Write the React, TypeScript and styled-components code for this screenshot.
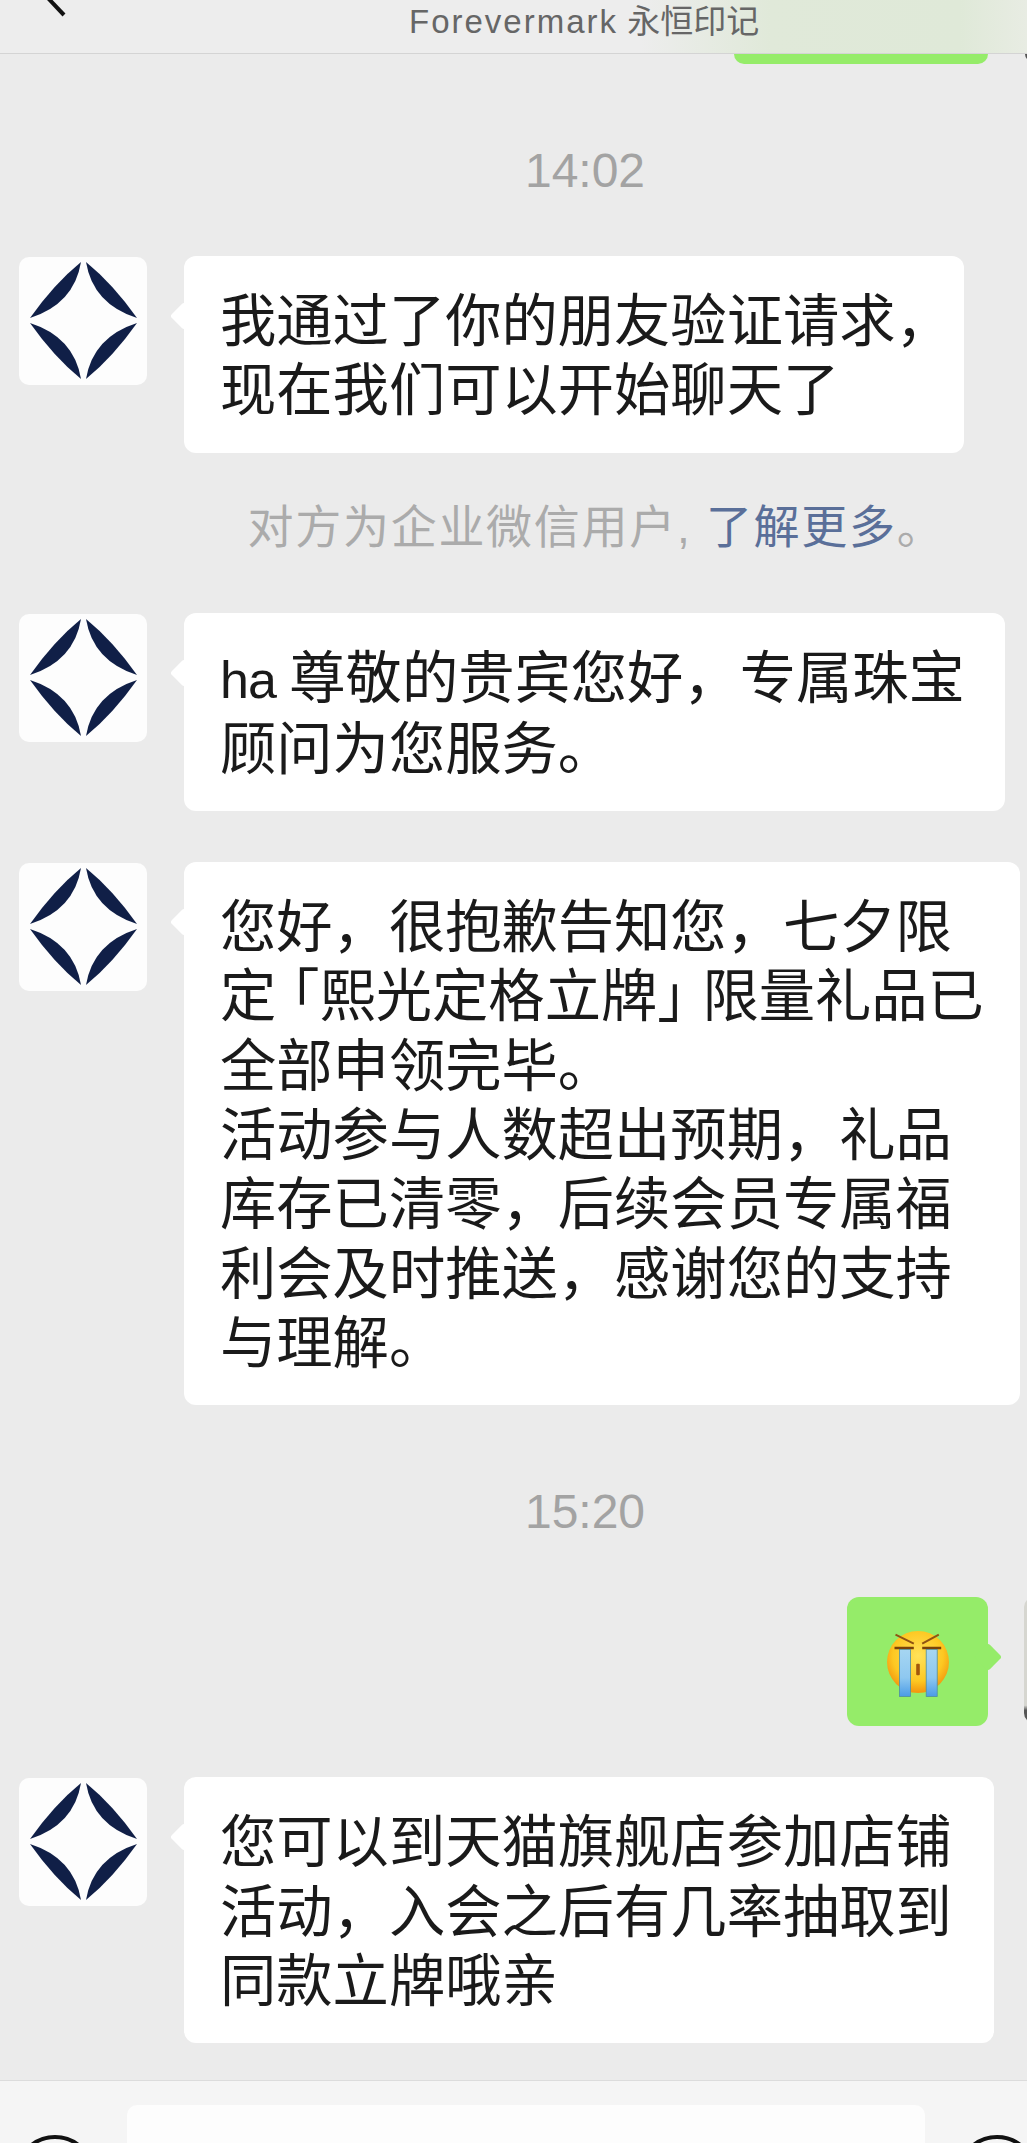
import React from "react"
import styled, { createGlobalStyle } from "styled-components"

const GlobalStyle = createGlobalStyle`
  html, body {
    margin: 0;
    padding: 0;
    background: #ebebeb;
  }
`

const LOGO_BLADES = [
    "M62 5Q35 27 11 61Q55 47 62 5Z",
    "M67 5Q94 27 118 61Q74 47 67 5Z",
    "M11 66Q35 100 62 122Q55 80 11 66Z",
    "M118 66Q94 100 67 122Q74 80 118 66Z",
]

function Logo() {
    return (
        <Avatar>
            <svg width="128" height="128" viewBox="0 0 128 128">
                {LOGO_BLADES.map((d) => (
                    <path key={d} d={d} fill="#101f47" />
                ))}
            </svg>
        </Avatar>
    )
}

function CryingFace() {
    return (
        <svg width="72" height="72" viewBox="0 0 72 72">
            <defs>
                <radialGradient id="face" cx="50%" cy="40%" r="58%">
                    <stop offset="0%" stopColor="#ffe25a" />
                    <stop offset="70%" stopColor="#fdc822" />
                    <stop offset="100%" stopColor="#f39a10" />
                </radialGradient>
                <linearGradient id="tear" x1="0" y1="0" x2="0" y2="1">
                    <stop offset="0%" stopColor="#a6d6f2" />
                    <stop offset="60%" stopColor="#8ec8f0" />
                    <stop offset="100%" stopColor="#4a9be6" />
                </linearGradient>
            </defs>
            <circle cx="36" cy="36" r="31" fill="url(#face)" />
            <path d="M13.5 8.7L31.8 17.7M56.8 8.7L40.2 17.7" stroke="#8f5413" strokeWidth="2" />
            <path d="M12.5 22H31.8M40.2 22H59.2" stroke="#7a4208" strokeWidth="2.4" />
            <rect x="17.5" y="23.5" width="11" height="47" fill="url(#tear)" stroke="#4f8e9e" strokeWidth="0.8" />
            <rect x="44.2" y="23.5" width="11" height="47" fill="url(#tear)" stroke="#4f8e9e" strokeWidth="0.8" />
            <rect x="34.2" y="37.7" width="3.6" height="11.6" rx="1" fill="#a3570b" />
        </svg>
    )
}

export default function App() {
    return (
        <Screen lang="zh-CN">
            <GlobalStyle />
            <Header>
                <BackArrow width="24" height="20" viewBox="0 0 24 20">
                    <path d="M3 -4L21 15" stroke="#111" strokeWidth="4" fill="none" />
                </BackArrow>
                <Title>
                    <TitleLatin>Forevermark</TitleLatin> 永恒印记
                </Title>
            </Header>
            <Chat>
                <PeekRow>
                    <PeekBubble />
                    <PeekAvatar />
                </PeekRow>
                <Time>14:02</Time>
                <IncomingRow $top={55}>
                    <Logo />
                    <Bubble $width={780}>
                        我通过了你的朋友验证请求，<br />
                        现在我们可以开始聊天了
                    </Bubble>
                </IncomingRow>
                <Note>
                    对方为企业微信用户, <NoteLink>了解更多</NoteLink>。
                </Note>
                <IncomingRow $top={56}>
                    <Logo />
                    <Bubble $width={821}>
                        <Latin>ha </Latin>尊敬的贵宾您好，专属珠宝<br />
                        顾问为您服务。
                    </Bubble>
                </IncomingRow>
                <IncomingRow $top={51}>
                    <Logo />
                    <Bubble $width={836}>
                        您好，很抱歉告知您，七夕限<br />
                        定<OpenBracket>「</OpenBracket>熙光定格立牌<CloseBracket>」</CloseBracket>限量礼品已<br />
                        全部申领完毕。<br />
                        活动参与人数超出预期，礼品<br />
                        库存已清零，后续会员专属福<br />
                        利会及时推送，感谢您的支持<br />
                        与理解。
                    </Bubble>
                </IncomingRow>
                <Time>15:20</Time>
                <OutgoingRow>
                    <EmojiBubble>
                        <CryingFace />
                    </EmojiBubble>
                    <SelfAvatar />
                </OutgoingRow>
                <IncomingRow $top={51}>
                    <Logo />
                    <Bubble $width={810}>
                        您可以到天猫旗舰店参加店铺<br />
                        活动，入会之后有几率抽取到<br />
                        同款立牌哦亲
                    </Bubble>
                </IncomingRow>
            </Chat>
            <Footer>
                <RoundButton />
                <InputBox />
                <RoundButton />
            </Footer>
        </Screen>
    )
}

const Screen = styled.div`
    width: 1027px;
    height: 2143px;
    display: flex;
    flex-direction: column;
    overflow: hidden;
    background: #ebebeb;
    font-family: "Liberation Sans", "Noto Sans CJK SC", sans-serif;
`
const Header = styled.header`
    height: 53px;
    flex-shrink: 0;
    display: flex;
    align-items: flex-start;
    border-bottom: 1px solid #d4d4d4;
    background: linear-gradient(90deg, #ededed 640px, #e0e9d9 770px, #dfe9d8 960px, #e8ece3 1027px);
`
const BackArrow = styled.svg`
    margin-left: 43px;
    flex-shrink: 0;
`
const Title = styled.h1`
    margin: 0 0 0 342px;
    font-size: 33px;
    line-height: 44px;
    font-weight: 400;
    color: #666;
    white-space: nowrap;
`
const TitleLatin = styled.span`
    letter-spacing: 2px;
`
const Chat = styled.main`
    flex: 1;
    min-height: 0;
    display: flex;
    flex-direction: column;
    overflow: hidden;
`
const PeekRow = styled.div`
    width: 1152px;
    height: 10px;
    flex-shrink: 0;
    display: flex;
    justify-content: flex-end;
    gap: 37px;
`
const PeekBubble = styled.div`
    width: 254px;
    height: 10px;
    background: #95ec69;
    border-radius: 0 0 12px 12px;
`
const PeekAvatar = styled.div`
    width: 127px;
    height: 7px;
    background: #555;
    border-radius: 0 0 10px 10px;
`
const Time = styled.div`
    margin-top: 77px;
    padding-left: 143px;
    flex-shrink: 0;
    font-size: 48px;
    line-height: 60px;
    text-align: center;
    color: #a3a3a3;
`
const IncomingRow = styled.div<{ $top: number }>`
    margin-top: ${(p) => p.$top}px;
    padding-left: 19px;
    flex-shrink: 0;
    display: flex;
    align-items: flex-start;
    gap: 37px;
`
const Avatar = styled.div`
    width: 128px;
    height: 128px;
    margin-top: 1px;
    flex-shrink: 0;
    background: #fdfdfd;
    border-radius: 10px;
    line-height: 0;
`
const Bubble = styled.div<{ $width: number }>`
    position: relative;
    width: ${(p) => p.$width}px;
    box-sizing: border-box;
    padding: 31px 0 27px 36px;
    background: #fff;
    border-radius: 12px;
    font-size: 56.3px;
    line-height: 69.3px;
    color: #1a1a1a;
    white-space: nowrap;

    &::before {
        content: "";
        position: absolute;
        left: -10px;
        top: 50px;
        width: 20px;
        height: 20px;
        background: #fff;
        border-radius: 3px;
        transform: rotate(45deg);
    }
`
const Latin = styled.span`
    font-size: 52px;
    letter-spacing: -1px;
`
const OpenBracket = styled.span`
    margin-left: 15px;
    font-feature-settings: "halt";
`
const CloseBracket = styled.span`
    margin-right: 17px;
    font-feature-settings: "halt";
`
const Note = styled.div`
    margin-top: 44px;
    padding-left: 165px;
    flex-shrink: 0;
    font-size: 46px;
    line-height: 60px;
    letter-spacing: 1.7px;
    text-align: center;
    color: #ababab;
    white-space: nowrap;
`
const NoteLink = styled.span`
    color: #5a6f99;
`
const OutgoingRow = styled.div`
    width: 1152px;
    margin-top: 55px;
    flex-shrink: 0;
    display: flex;
    justify-content: flex-end;
    align-items: flex-start;
    gap: 36px;
`
const EmojiBubble = styled.div`
    position: relative;
    width: 141px;
    height: 129px;
    display: flex;
    align-items: center;
    justify-content: center;
    background: #95ec69;
    border-radius: 12px;

    &::after {
        content: "";
        position: absolute;
        right: -10px;
        top: 50px;
        width: 20px;
        height: 20px;
        background: #95ec69;
        border-radius: 3px;
        transform: rotate(45deg);
    }
`
const SelfAvatar = styled.div`
    width: 128px;
    height: 126px;
    background: linear-gradient(180deg, #d6d6d0 86%, #555 90%);
    border-radius: 10px;
`
const Footer = styled.footer`
    height: 63px;
    flex-shrink: 0;
    box-sizing: border-box;
    padding: 24px 0 0 15px;
    display: flex;
    align-items: flex-start;
    gap: 32px;
    overflow: hidden;
    background: #f5f5f5;
    border-top: 1px solid #dcdcdc;
`
const RoundButton = styled.div`
    width: 80px;
    height: 80px;
    margin-top: 30px;
    flex-shrink: 0;
    box-sizing: border-box;
    border: 4px solid #111;
    border-radius: 50%;
`
const InputBox = styled.div`
    width: 798px;
    height: 70px;
    flex-shrink: 0;
    background: #fdfdfd;
    border-radius: 10px;
`
